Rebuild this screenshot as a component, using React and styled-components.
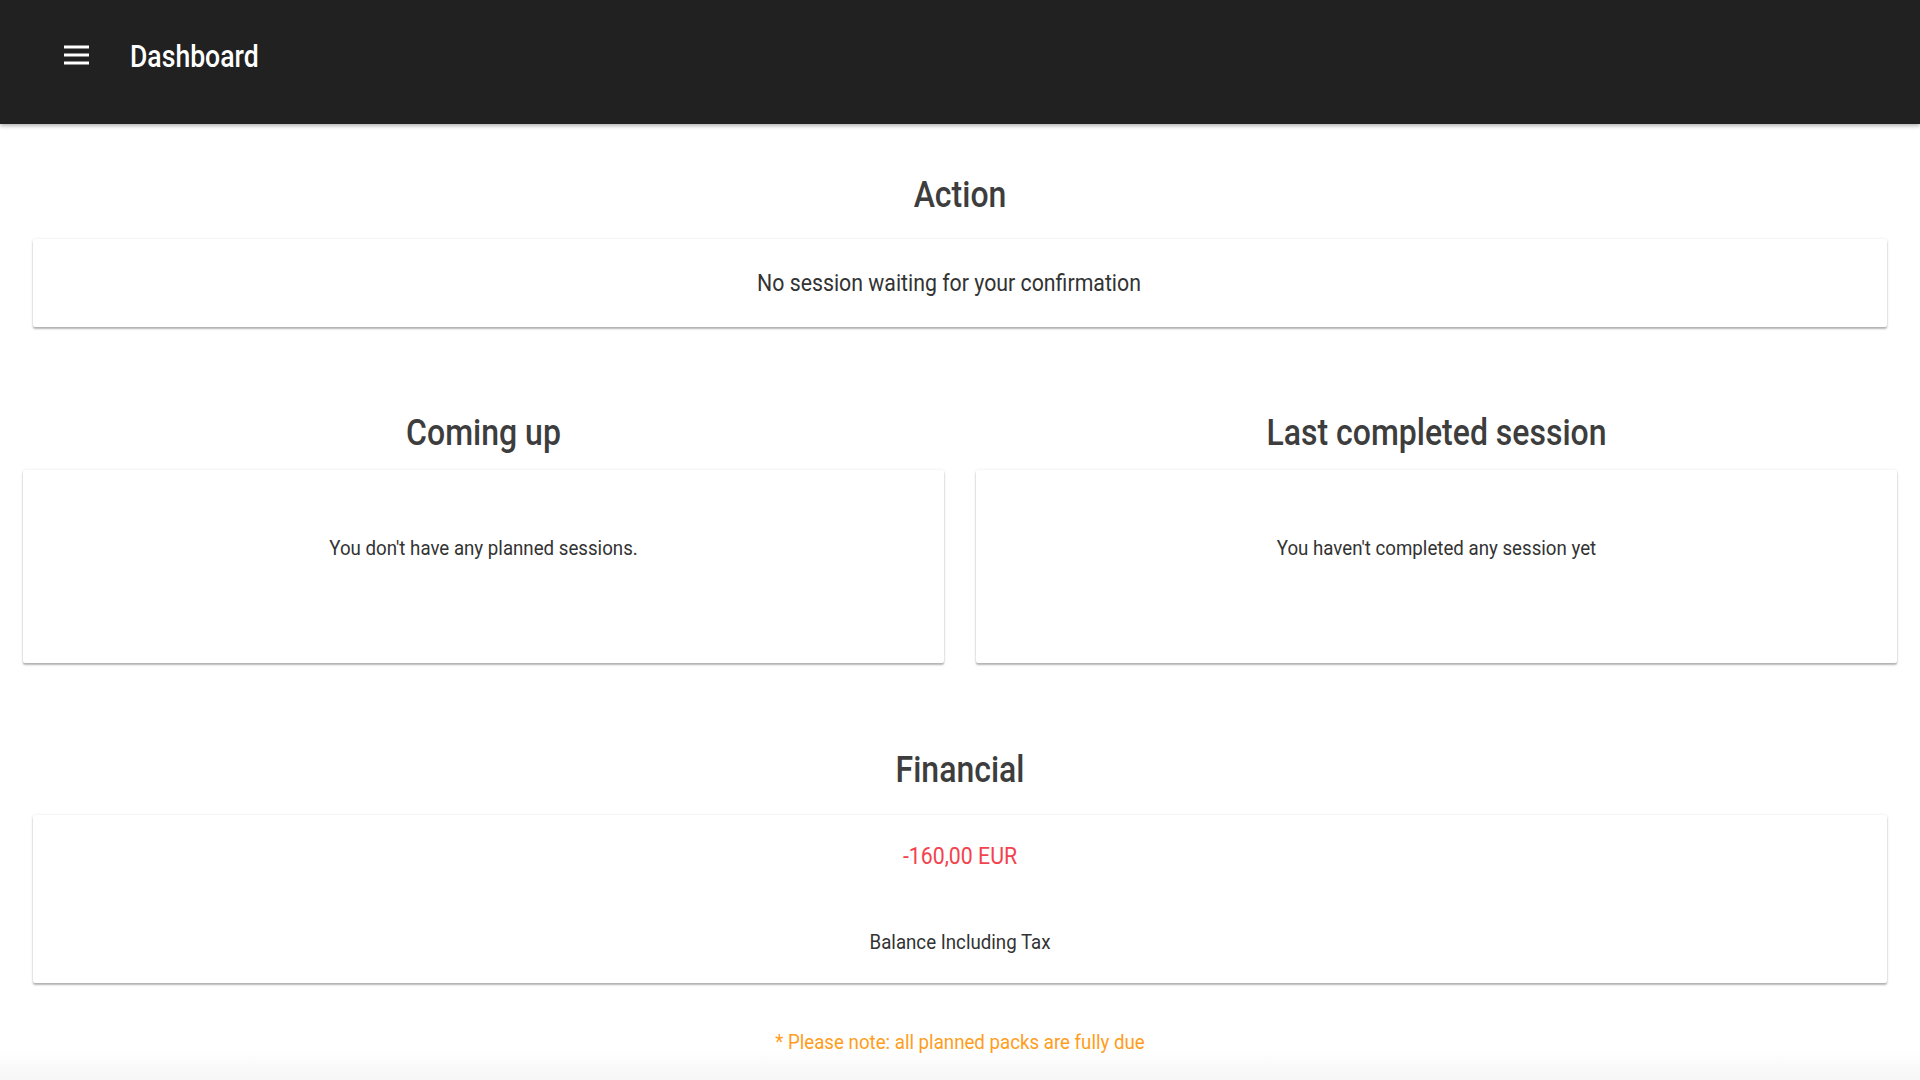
import React from "react";
import styled, { createGlobalStyle } from "styled-components";

const GlobalStyle = createGlobalStyle`
  html, body { margin: 0; padding: 0; background: #ffffff; }
  body { font-family: Roboto, "Noto Sans", "Liberation Sans", sans-serif; }
  * { box-sizing: border-box; }
`;

const Page = styled.div`
  min-height: 1080px;
  display: flex;
  flex-direction: column;
  background: linear-gradient(to bottom, #ffffff 0, #ffffff 1050px, #f6f6f6 1080px);
`;

const TopBar = styled.header`
  height: 124px;
  background: #212121;
  display: flex;
  align-items: center;
  padding: 0 0 14px 64px;
  gap: 41px;
  box-shadow: 0 2px 4px rgba(0, 0, 0, 0.3);
`;

const MenuButton = styled.button`
  background: none;
  border: 0;
  padding: 0;
  width: 25px;
  height: 20px;
  display: flex;
  cursor: pointer;
`;

const BarTitle = styled.h1`
  margin: 0;
  color: #ffffff;
  font-size: 26.6px;
  font-weight: 500;
  transform: scaleY(1.18);
`;

const Main = styled.main`
  display: flex;
  flex-direction: column;
  padding: 0 23px;
`;

const Section = styled.section`
  display: flex;
  flex-direction: column;
  align-items: stretch;
  padding: ${(p) => p.$pad || "0"};
  margin-top: ${(p) => p.$top || 0}px;
`;

const Columns = styled.div`
  display: grid;
  grid-template-columns: 1fr 1fr;
  gap: 32px;
  margin-top: ${(p) => p.$top || 0}px;
`;

const Heading = styled.h2`
  margin: 0 0 ${(p) => p.$gap || 25}px;
  text-align: center;
  font-size: 32px;
  line-height: 40px;
  font-weight: 500;
  color: #3d3d3d;
  transform: scaleY(1.16);
`;

const Card = styled.div`
  background: #ffffff;
  border-radius: 2px;
  box-shadow: 0 2px 2px rgba(0, 0, 0, 0.28), 0 0 3px rgba(0, 0, 0, 0.1);
  display: flex;
  flex-direction: column;
  align-items: center;
  min-height: ${(p) => p.$height || 0}px;
  padding: ${(p) => p.$pad || "32px 16px"};
`;

const CardText = styled.p`
  margin: 0;
  font-size: ${(p) => p.$size || 18.7}px;
  line-height: 24px;
  color: #333333;
  text-align: center;
  transform: scaleY(1.13);
`;

const Amount = styled.p`
  margin: 0;
  font-size: 21.3px;
  line-height: 28px;
  color: #f2434f;
  text-align: center;
  transform: scaleY(1.13);
`;

const Caption = styled(CardText)`
  margin-top: ${(p) => p.$top || 0}px;
`;

const Note = styled.p`
  margin: 47px 0 0;
  text-align: center;
  font-size: 18.7px;
  line-height: 24px;
  color: #ff9d21;
  transform: scaleY(1.13);
`;

function MenuIcon() {
  return (
    <svg width="25" height="20" viewBox="0 0 25 20" fill="#ffffff">
      <rect x="0" y="0.5" width="25" height="3" />
      <rect x="0" y="8.5" width="25" height="3" />
      <rect x="0" y="16.5" width="25" height="3" />
    </svg>
  );
}

export default function App() {
  return (
    <>
      <GlobalStyle />
      <Page>
        <TopBar>
          <MenuButton aria-label="menu">
            <MenuIcon />
          </MenuButton>
          <BarTitle>Dashboard</BarTitle>
        </TopBar>
        <Main>
          <Section $pad="0 10px" $top={50}>
            <Heading $gap={25}>Action</Heading>
            <Card $pad="32px 38px 32px 16px">
              <CardText $size={21.3}>No session waiting for your confirmation</CardText>
            </Card>
          </Section>
          <Columns $top={85}>
            <Section>
              <Heading $gap={18}>Coming up</Heading>
              <Card $height={193} $pad="66px 16px">
                <CardText>You don't have any planned sessions.</CardText>
              </Card>
            </Section>
            <Section>
              <Heading $gap={18}>Last completed session</Heading>
              <Card $height={193} $pad="66px 16px">
                <CardText>You haven't completed any session yet</CardText>
              </Card>
            </Section>
          </Columns>
          <Section $pad="0 10px" $top={86}>
            <Heading $gap={26}>Financial</Heading>
            <Card $height={168} $pad="27px 16px">
              <Amount>-160,00 EUR</Amount>
              <Caption $top={60}>Balance Including Tax</Caption>
            </Card>
          </Section>
          <Note>* Please note: all planned packs are fully due</Note>
        </Main>
      </Page>
    </>
  );
}
